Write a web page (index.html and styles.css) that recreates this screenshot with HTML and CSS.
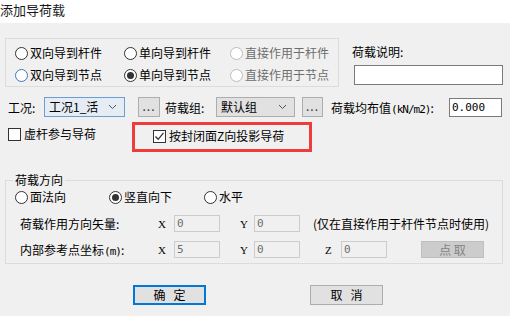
FILE: index.html
```html
<!DOCTYPE html>
<html lang="zh">
  <head>
    <meta charset="UTF-8" />
    <title>添加导荷载</title>
    <link rel="stylesheet" href="styles.css">
  </head>
  <body>
    <div class="dialog">
      <div class="titlebar">添加导荷载</div>

      <div class="top">
        <div class="group1">
          <label class="radio"><span class="dot"></span>双向导到杆件</label>
          <label class="radio"><span class="dot"></span>单向导到杆件</label>
          <label class="radio disabled"><span class="dot"></span>直接作用于杆件</label>
          <label class="radio"><span class="dot focus"></span>双向导到节点</label>
          <label class="radio"><span class="dot on"></span>单向导到节点</label>
          <label class="radio disabled"><span class="dot"></span>直接作用于节点</label>
        </div>
        <div class="desc">
          <div class="desc-label">荷载说明:</div>
          <div class="textbox desc-box"></div>
        </div>
      </div>

      <div class="row-case">
        <span class="lbl-case">工况:</span>
        <div class="combo combo-focus">工况1_活<svg class="chev" width="9" height="6" viewBox="0 0 9 6"><path d="M1 1 L4.5 4.5 L8 1" fill="none" stroke="#555" stroke-width="1"/></svg></div>
        <div class="dots dots1">...</div>
        <span class="lbl-group">荷载组:</span>
        <div class="combo combo2">默认组<svg class="chev" width="9" height="6" viewBox="0 0 9 6"><path d="M1 1 L4.5 4.5 L8 1" fill="none" stroke="#555" stroke-width="1"/></svg></div>
        <div class="dots dots2">...</div>
        <span class="lbl-value">荷载均布值<span class="mono">(kN/m2)</span>:</span>
        <div class="textbox value-box">0.000</div>
      </div>

      <div class="row-check">
        <label class="check check1"><span class="box"></span>虚杆参与导荷</label>
        <div class="highlight">
          <label class="check"><span class="box"><svg width="11" height="11" viewBox="0 0 11 11"><path d="M1.5 5.5 L4.2 8.3 L9.5 1.8" fill="none" stroke="#333" stroke-width="1.3"/></svg></span>按封闭面Z向投影导荷</label>
        </div>
      </div>

      <fieldset class="group2">
        <legend>荷载方向</legend>
        <div class="dir-row">
          <label class="radio dir1"><span class="dot"></span>面法向</label>
          <label class="radio dir2"><span class="dot on"></span>竖直向下</label>
          <label class="radio"><span class="dot"></span>水平</label>
        </div>
        <div class="vec-row">
          <span class="vec-label">荷载作用方向矢量:</span>
          <span class="axis">X</span>
          <div class="textbox off">0</div>
          <span class="axis axis-y">Y</span>
          <div class="textbox off">0</div>
          <span class="note">(仅在直接作用于杆件节点时使用)</span>
        </div>
        <div class="vec-row ref-row">
          <span class="vec-label">内部参考点坐标<span class="mono">(m)</span>:</span>
          <span class="axis">X</span>
          <div class="textbox off">5</div>
          <span class="axis axis-y">Y</span>
          <div class="textbox off">0</div>
          <span class="axis axis-z">Z</span>
          <div class="textbox off">0</div>
          <div class="pick">点 取</div>
        </div>
      </fieldset>

      <div class="actions">
        <div class="btn btn-ok">确&nbsp;&nbsp;&nbsp;定</div>
        <div class="btn btn-cancel">取&nbsp;&nbsp;&nbsp;消</div>
      </div>
    </div>
  </body>
</html>
```

FILE: styles.css
```css
body {
  margin: 0;
  font-family: "Noto Sans CJK SC", "Noto Sans", sans-serif;
  font-size: 12px;
  color: #000000;
}

.dialog {
  width: 510px;
  height: 316px;
  background-color: #f0f0f0;
  overflow: hidden;
}

.titlebar {
  height: 23px;
  line-height: 20px;
  font-size: 13px;
  background-color: #ffffff;
  color: #1a1a1a;
}

/* top area: radio group + description */
.top {
  display: flex;
  margin-top: 15px;
  padding-left: 5px;
}

.group1 {
  box-sizing: border-box;
  width: 334px;
  height: 49px;
  border: 1px solid #dcdcdc;
  padding: 4px 0 0 9px;
  display: grid;
  grid-template-columns: 109px 106px auto;
  grid-auto-rows: 20px;
  row-gap: 2px;
}

.radio {
  display: flex;
  align-items: center;
  white-space: nowrap;
  line-height: 16px;
}

.radio .dot {
  box-sizing: border-box;
  width: 13px;
  height: 13px;
  border: 1px solid #333333;
  border-radius: 50%;
  background-color: #ffffff;
  margin-right: 2px;
  position: relative;
}

.radio .dot.focus {
  border-color: #3d7ab5;
}

.radio .dot.on::after {
  content: "";
  position: absolute;
  left: 2px;
  top: 2px;
  width: 7px;
  height: 7px;
  border-radius: 50%;
  background-color: #333333;
}

.radio.disabled {
  color: #6d6d6d;
}

.radio.disabled .dot {
  border-color: #bcbcbc;
}

.desc {
  margin-left: 13px;
  padding-top: 6px;
}

.desc-label {
  line-height: 16px;
}

.textbox {
  box-sizing: border-box;
  background-color: #ffffff;
  border: 1px solid #7a7a7a;
  font-family: "DejaVu Sans Mono", monospace;
  font-size: 11px;
  line-height: 17px;
  padding-left: 2px;
}

.desc-box {
  width: 149px;
  height: 20px;
  margin-top: 5px;
  margin-left: 2px;
}

/* case row */
.row-case {
  display: flex;
  align-items: center;
  margin-top: 10px;
  padding-left: 8px;
  height: 20px;
}

.lbl-case {
  width: 36px;
}

.combo {
  box-sizing: border-box;
  height: 20px;
  border: 1px solid #adadad;
  background-color: #e1e1e1;
  display: flex;
  align-items: center;
  justify-content: space-between;
  padding: 0 7px 0 4px;
  line-height: 16px;
}

.combo-focus {
  width: 81px;
  border-color: #6b9fd3;
  background-color: #e5ecf4;
}

.combo2 {
  width: 79px;
}

.dots {
  box-sizing: border-box;
  width: 22px;
  height: 20px;
  border: 1px solid #adadad;
  background-color: #e1e1e1;
  text-align: center;
  line-height: 16px;
  letter-spacing: 1px;
  color: #333333;
}

.dots1 {
  margin-left: 13px;
}

.lbl-group {
  margin-left: 5px;
  width: 51px;
}

.dots2 {
  margin-left: 7px;
  width: 21px;
}

.lbl-value {
  margin-left: 8px;
  width: 118px;
}

.mono {
  font-family: "DejaVu Sans Mono", monospace;
  font-size: 11px;
  letter-spacing: -1px;
}

.value-box {
  width: 53px;
  height: 19px;
}

/* checkbox row */
.row-check {
  display: flex;
  margin-top: 5px;
  padding-left: 8px;
}

.check {
  display: flex;
  align-items: center;
  line-height: 16px;
  white-space: nowrap;
}

.check .box {
  box-sizing: border-box;
  width: 13px;
  height: 13px;
  border: 1px solid #333333;
  background-color: #ffffff;
  margin-right: 3px;
  display: flex;
  align-items: center;
  justify-content: center;
}

.check1 {
  width: 124px;
  margin-top: 4px;
  align-self: flex-start;
}

.highlight {
  box-sizing: border-box;
  width: 180px;
  height: 30px;
  border: 3px solid #ee3c3c;
  padding: 3px 0 0 18px;
}

/* direction group */
.group2 {
  box-sizing: border-box;
  width: 498px;
  margin: 20px 0 0 5px;
  padding: 0 0 5px 0;
  border: 1px solid #dcdcdc;
}

.group2 legend {
  margin-left: 7px;
  padding: 0 2px;
  line-height: 16px;
}

.dir-row {
  display: flex;
  padding-left: 9px;
  margin-top: 1px;
  height: 16px;
}

.dir1 {
  width: 94px;
}

.dir2 {
  width: 95px;
}

.vec-row {
  display: flex;
  align-items: center;
  padding-left: 14px;
  margin-top: 10px;
  height: 17px;
}

.ref-row {
  margin-top: 9px;
}

.vec-label {
  width: 138px;
}

.axis {
  width: 16px;
  font-family: "Liberation Serif", serif;
  font-size: 11px;
}

.axis-y {
  margin-left: 20px;
  width: 14px;
}

.axis-z {
  margin-left: 25px;
}

.textbox.off {
  width: 46px;
  height: 17px;
  line-height: 15px;
  border-color: #cccccc;
  background-color: #f0f0f0;
  color: #6d6d6d;
}

.note {
  margin-left: 13px;
}

.pick {
  box-sizing: border-box;
  width: 63px;
  height: 17px;
  margin-left: 34px;
  border: 1px solid #bfbfbf;
  background-color: #cccccc;
  color: #838383;
  text-align: center;
  line-height: 15px;
}

/* buttons */
.actions {
  display: flex;
  margin-top: 21px;
  padding-left: 133px;
}

.btn {
  box-sizing: border-box;
  width: 73px;
  height: 20px;
  background-color: #e1e1e1;
  border: 1px solid #adadad;
  text-align: center;
  line-height: 18px;
}

.btn-ok {
  border: 2px solid #0078d7;
  line-height: 16px;
}

.btn-cancel {
  margin-left: 104px;
}
```
